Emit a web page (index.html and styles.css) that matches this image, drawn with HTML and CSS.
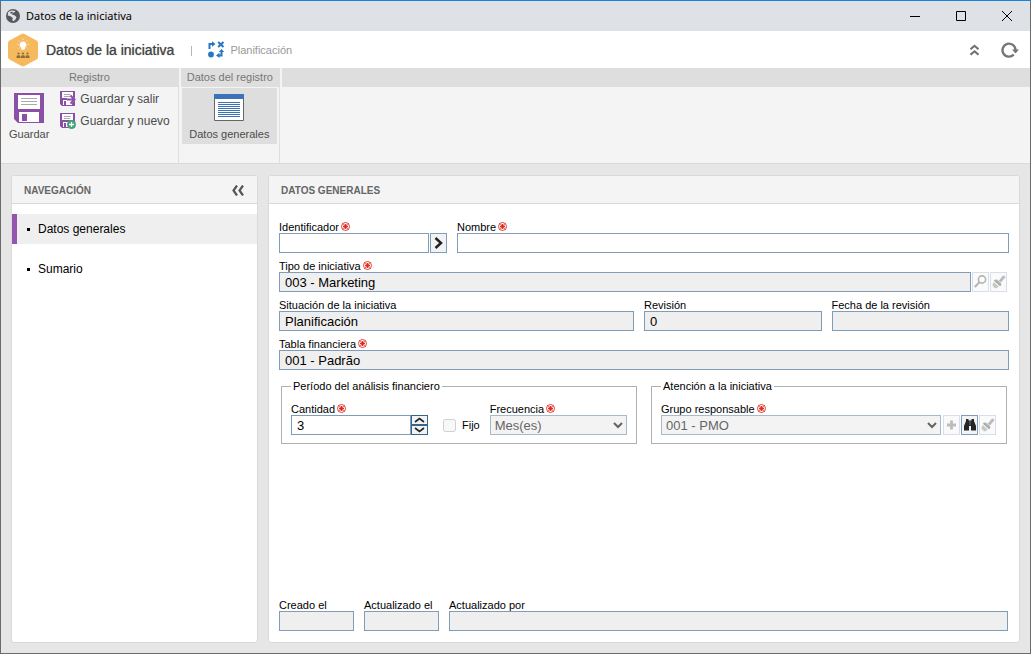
FILE: index.html
```html
<!DOCTYPE html>
<html lang="es">
<head>
<meta charset="utf-8">
<title>Datos de la iniciativa</title>
<link rel="stylesheet" href="styles.css">
</head>
<body>
<svg class="defs" aria-hidden="true">
  <symbol id="req" viewBox="0 0 9 9">
    <circle cx="4.500" cy="4.500" r="4" fill="#fff" stroke="#e0281c" stroke-width=".9"/>
    <path d="M4.500 2v5M2 4.500h5" stroke="#e0281c" stroke-width="1.700"/>
    <path d="M1.500 1.500l6 6M7.500 1.500l-6 6" stroke="#e0281c" stroke-width=".6"/>
  </symbol>
  <symbol id="brush" viewBox="0 0 15 18">
    <path d="M13.300 2.800l1 1.300-4.300 5.300-2.300-2z" fill="#b9b9b9"/>
    <path d="M9.500 5.600l2.500-3.100 1.500.5.800 1.500-3.200 2.800z" fill="#bdbdbd"/>
    <path d="M3.200 7l1.300-.6 5.800 5.100-.4 1.300-1.200.3-5.500-5z" fill="#a8a8a8"/>
    <path d="M5.800 6.300l4.700 4.400-1.300 1.300-4.600-4.400z" fill="#b4b4b4"/>
    <path d="M2.800 9l5 4.800-3 1.700-1.300-1-1.200.1.300-1.400-1.400-.8z" fill="#c6c6c6"/>
  </symbol>
  <symbol id="disk" viewBox="0 0 15 15">
    <path d="M0 0h15v15H2L0 13z" fill="#8b4fa8"/>
    <path d="M2 1h11v6H2zM3 9h9v5H3z" fill="#fff"/>
    <path d="M4 3.500h7M4 5.500h6" stroke="#aaa" stroke-width="1"/>
    <path d="M4 10h2v4H4z" fill="#8b4fa8"/>
  </symbol>
</svg>
<div class="window">
  <header class="titlebar">
    <svg class="globe" viewBox="0 0 14 14" aria-hidden="true">
      <circle cx="7" cy="7" r="7" fill="#55585c"/>
      <path d="M2 3.500C4 1.500 7 1 9.500 2.200L8 3.500 6.500 4 6 5.500l2.500.7L10.500 8 9.500 10.500 7 12.500 6.300 10.500 6.800 9 4.500 7.200 1.800 6.500z" fill="#dee1e6"/>
      <path d="M4 3.500l2.300-1 .7 1L5 5z" fill="#55585c"/>
    </svg>
    <span class="titlebar-text">Datos de la iniciativa</span>
    <div class="window-buttons">
      <button type="button" aria-label="Minimizar"><svg viewBox="0 0 11 11"><path d="M0 5.500h10" stroke="#000"/></svg></button>
      <button type="button" aria-label="Maximizar"><svg viewBox="0 0 11 11"><path d="M.5.500h9v9h-9z" fill="none" stroke="#000"/></svg></button>
      <button type="button" aria-label="Cerrar"><svg viewBox="0 0 11 11"><path d="M0 0l10 10M10 0L0 10" stroke="#000"/></svg></button>
    </div>
  </header>

  <div class="heading">
    <svg class="hexagon" viewBox="0 0 32 34" aria-hidden="true">
      <path d="M14.500.9q1.500-.8 3 0l12 6.600q1.500.9 1.500 2.500v14q0 1.600-1.500 2.500l-12 6.600q-1.500.8-3 0l-12-6.600Q1 25.600 1 24V10q0-1.600 1.500-2.500z" fill="#f6b95d"/>
      <path d="M16 8.500a3.300 3.300 0 0 1 2 6l-.4 2.300h-3.200l-.4-2.300a3.300 3.300 0 0 1 2-6z" fill="#fff"/>
      <path d="M16 5.500V7M11.800 7.500l1 1M20.200 7.500l-1 1M10 11.300h1.500M20.500 11.300H22M11.500 15.500l1-1M20.500 15.500l-1-1" stroke="#fde9cb"/>
      <g fill="#8d6c3b"><circle cx="11.500" cy="20.500" r="1.100"/><circle cx="16" cy="20.500" r="1.100"/><circle cx="20.500" cy="20.500" r="1.100"/><path d="M9.500 25v-1.300q0-1.400 2-1.400t2 1.400V25zM14 25v-1.300q0-1.400 2-1.400t2 1.400V25zM18.500 25v-1.300q0-1.400 2-1.400t2 1.400V25z"/></g>
    </svg>
    <h1 class="heading-title">Datos de la iniciativa</h1>
    <span class="heading-divider"></span>
    <svg class="flow" viewBox="0 0 17 17" aria-hidden="true">
      <path d="M1.500 8V3H5M13.500 10v4.500H11" fill="none" stroke="#2477c5" stroke-width="2"/>
      <path d="M4 .2L7.500 3 4 5.800zM11.500 11.700V17L8 14.500z" fill="#2477c5"/>
      <path d="M10.800 11l2.700-3 2.700 3z" fill="#2477c5"/>
      <circle cx="3" cy="13.500" r="2.900" fill="#2477c5"/>
      <path d="M10.200 1l5.300 5M15.500 1l-5.300 5" stroke="#2477c5" stroke-width="2"/>
    </svg>
    <span class="heading-stage">Planificación</span>
    <div class="heading-tools">
      <button type="button" aria-label="Contraer"><svg width="9" height="12" viewBox="0 0 9 12"><path d="M.5 5.300l4-3.500 4 3.500M.5 10.800l4-3.500 4 3.500" fill="none" stroke="#707070" stroke-width="2.100"/></svg></button>
      <button type="button" aria-label="Actualizar"><svg width="18" height="16" viewBox="0 0 18 16"><path d="M12.800 12.500A6.500 6.500 0 1 1 14.500 8" fill="none" stroke="#757575" stroke-width="2.400"/><path d="M11 7.500h7l-3.500 4z" fill="#757575"/></svg></button>
    </div>
  </div>

  <div class="ribbon">
    <section class="group">
      <h2 class="group-title">Registro</h2>
      <div class="group-body">
        <button type="button" class="tool-large">
          <svg width="30" height="30" viewBox="0 0 30 30"><path d="M0 0h30v30H4l-4-4z" fill="#8b4fa8"/><path d="M4 2h22v14H4zM5 19h20v10H5z" fill="#fff"/><path d="M7 5.500h16M7 8.500h16M7 11.500h16" stroke="#aaa"/><path d="M8 21h5v7H8z" fill="#8b4fa8"/></svg>
          <span>Guardar</span>
        </button>
        <div class="tool-stack">
          <button type="button" class="tool-small">
            <svg width="16" height="16" viewBox="0 0 16 16"><use href="#disk" width="15" height="15"/><path d="M7 6h3V3l6 5.500-6 5.500v-3H7z" fill="#fff"/><path d="M7 8.500h7M10.500 4.500l4 4-4 4" fill="none" stroke="#8b4fa8" stroke-width="2"/></svg>
            <span>Guardar y salir</span>
          </button>
          <button type="button" class="tool-small">
            <svg width="16" height="16" viewBox="0 0 16 16"><use href="#disk" width="15" height="15"/><circle cx="11.500" cy="11.500" r="4.500" fill="#43a577"/><path d="M11.500 9v5M9 11.500h5" stroke="#fff" stroke-width="1.300"/></svg>
            <span>Guardar y nuevo</span>
          </button>
        </div>
      </div>
    </section>
    <section class="group">
      <h2 class="group-title">Datos del registro</h2>
      <div class="group-body">
        <button type="button" class="tool-large selected">
          <svg width="30" height="30" viewBox="0 0 30 30"><path d="M.5 2.500h29v25H.5z" fill="#fff" stroke="#666"/><path d="M0 1h30v5H0z" fill="#3b73b9"/><path d="M4 9.500h22M4 11.500h22M4 13.500h22M4 15.500h22M4 17.500h22M4 19.500h22M4 21.500h22M4 23.500h22" stroke="#3b73b9"/></svg>
          <span>Datos generales</span>
        </button>
      </div>
    </section>
    <div class="group-rest"><div class="group-title"></div></div>
  </div>

  <main class="workspace">
    <nav class="panel nav">
      <div class="panel-head">
        <h2>NAVEGACIÓN</h2>
        <button type="button" class="plain" aria-label="Ocultar navegación"><svg width="12" height="11" viewBox="0 0 12 11"><path d="M5 .5l-3.500 5 3.500 5M11 .5l-3.500 5 3.500 5" fill="none" stroke="#555" stroke-width="2.200"/></svg></button>
      </div>
      <ul class="nav-list">
        <li><a href="#general" class="current">Datos generales</a></li>
        <li><a href="#sumario">Sumario</a></li>
      </ul>
    </nav>

    <section class="panel content" id="general">
      <div class="panel-head"><h2>DATOS GENERALES</h2></div>
      <form class="form">
        <div class="row">
          <div class="field id-field">
            <label for="ident">Identificador<svg class="req"><use href="#req"/></svg></label>
            <div class="line">
              <input id="ident" type="text">
              <button type="button" class="mini" aria-label="Generar"><svg width="9" height="12" viewBox="0 0 9 12"><path d="M1.500 1L7 6l-5.500 5" fill="none" stroke="#222" stroke-width="2.500"/></svg></button>
            </div>
          </div>
          <div class="field grow">
            <label for="nombre">Nombre<svg class="req"><use href="#req"/></svg></label>
            <input id="nombre" type="text">
          </div>
        </div>
        <div class="field">
          <label for="tipo">Tipo de iniciativa<svg class="req"><use href="#req"/></svg></label>
          <div class="line type-line">
            <input id="tipo" type="text" value="003 - Marketing" readonly>
            <button type="button" class="mini faint" aria-label="Ver" disabled><svg width="15" height="18" viewBox="0 0 15 18"><circle cx="9" cy="6.500" r="3.600" fill="#fff" stroke="#b4b4b4" stroke-width="1.600"/><path d="M6.400 9.200L1.800 14" stroke="#b4b4b4" stroke-width="2"/></svg></button>
            <button type="button" class="mini faint" aria-label="Limpiar tipo" disabled><svg width="15" height="18"><use href="#brush"/></svg></button>
          </div>
        </div>
        <div class="thirds">
          <div class="field"><label for="situacion">Situación de la iniciativa</label><input id="situacion" type="text" value="Planificación" readonly></div>
          <div class="field"><label for="revision">Revisión</label><input id="revision" type="text" value="0" readonly></div>
          <div class="field"><label for="fecha">Fecha de la revisión</label><input id="fecha" type="text" readonly></div>
        </div>
        <div class="field">
          <label for="tabla">Tabla financiera<svg class="req"><use href="#req"/></svg></label>
          <input id="tabla" type="text" value="001 - Padrão" readonly>
        </div>
        <div class="sets">
          <fieldset>
            <legend>Período del análisis financiero</legend>
            <div class="period">
              <div class="field amount">
                <label for="cantidad">Cantidad<svg class="req"><use href="#req"/></svg></label>
                <div class="amount-line">
                  <input id="cantidad" type="text" value="3">
                  <div class="spinner">
                    <button type="button" aria-label="Aumentar"><svg width="11" height="6" viewBox="0 0 11 6"><path d="M1 5l4.500-3.500L10 5" fill="none" stroke="#222" stroke-width="1.600"/></svg></button>
                    <button type="button" aria-label="Disminuir"><svg width="11" height="6" viewBox="0 0 11 6"><path d="M1 1l4.500 3.500L10 1" fill="none" stroke="#222" stroke-width="1.600"/></svg></button>
                  </div>
                </div>
              </div>
              <div class="check"><input id="fijo" type="checkbox" disabled><label for="fijo">Fijo</label></div>
              <div class="field grow">
                <label for="frecuencia">Frecuencia<svg class="req"><use href="#req"/></svg></label>
                <select id="frecuencia" disabled><option>Mes(es)</option></select>
              </div>
            </div>
          </fieldset>
          <fieldset>
            <legend>Atención a la iniciativa</legend>
            <div class="field">
              <label for="grupo">Grupo responsable <svg class="req"><use href="#req"/></svg></label>
              <div class="line group-line">
                <select id="grupo" disabled><option>001 - PMO</option></select>
                <button type="button" class="mini faint" aria-label="Agregar" disabled><svg width="9" height="10" viewBox="0 0 9 10"><path d="M4.500.5v9M0 5h9" stroke="#bcbcbc" stroke-width="2.800"/></svg></button>
                <button type="button" class="mini" aria-label="Buscar"><svg width="12" height="12" viewBox="0 0 12 12"><path d="M2 0h2.500v1.500h3V0H10v2l2 5v4.500H7V7H5v4.500H0V7l2-5z" fill="#252525"/><path d="M5.500 2v4M6.500 2v4" stroke="#777" stroke-width=".5"/></svg></button>
                <button type="button" class="mini faint" aria-label="Limpiar grupo" disabled><svg width="15" height="18"><use href="#brush"/></svg></button>
              </div>
            </div>
          </fieldset>
        </div>
        <div class="row audit">
          <div class="field date"><label for="creado">Creado el</label><input id="creado" type="text" readonly></div>
          <div class="field date"><label for="actualizado">Actualizado el</label><input id="actualizado" type="text" readonly></div>
          <div class="field grow"><label for="por">Actualizado por</label><input id="por" type="text" readonly></div>
        </div>
      </form>
    </section>
  </main>
</div>
</body>
</html>
```
FILE: styles.css
```css
* { box-sizing: border-box; }
body {
  margin: 0;
  font: 11px/13px "Liberation Sans", Arial, sans-serif;
  color: #000;
}
h1, h2, ul { margin: 0; padding: 0; }
svg { display: block; flex: none; }
button {
  font: inherit;
  color: inherit;
  margin: 0;
  padding: 0;
  border: 0;
  background: none;
}
.defs { position: absolute; width: 0; height: 0; }

.window {
  min-height: 100vh;
  display: flex;
  flex-direction: column;
  border: 1px solid #6b6b6b;
  border-top-color: #1883d7;
  background: #e6e6e6;
}

.titlebar {
  display: flex;
  align-items: center;
  height: 30px;
  padding-left: 5px;
  background: #dee1e6;
}
.globe { width: 14px; height: 14px; }
.titlebar-text {
  margin-left: 6px;
  font: 11px/16px "Noto Sans", "Open Sans", sans-serif;
}
.window-buttons { display: flex; margin-left: auto; }
.window-buttons button {
  width: 46px;
  height: 30px;
  display: grid;
  place-items: center;
}
.window-buttons svg { width: 11px; height: 11px; }

.heading {
  display: flex;
  align-items: center;
  height: 37px;
  padding: 0 11px 0 6px;
  background: #fff;
}
.hexagon { width: 32px; height: 34px; }
.heading-title {
  margin-left: 7px;
  font-size: 14px;
  font-weight: normal;
  line-height: 16px;
  color: #444;
  text-shadow: 0 0 1px #777;
}
.heading-divider { width: 1px; height: 10px; margin: 2px 16px 0 17px; background: #b5b5b5; }
.flow { width: 17px; height: 17px; }
.heading-stage { margin-left: 5px; padding-top: 1px; color: #999; }
.heading-tools { display: flex; align-items: center; gap: 22px; margin-left: auto; }

.ribbon {
  display: flex;
  height: 96px;
  background: #f4f4f4;
  border-bottom: 1px solid #d9d9d9;
}
.group { border-right: 1px solid #dedede; display: flex; flex-direction: column; }
.group + .group { padding-left: 2px; }
.group-rest { flex: 1; padding-left: 2px; }
.group-title {
  height: 19px;
  padding: 0 6px;
  font-size: 11px;
  font-weight: normal;
  line-height: 19px;
  text-align: center;
  color: #777;
  background: #dedede;
}
.group-body { display: flex; color: #4c4c4c; padding: 1px 8px 0; gap: 11px; }
.group + .group .group-body { padding: 1px 2px 0 1px; }
.tool-large {
  display: flex;
  flex-direction: column;
  align-items: center;
  gap: 5px;
  height: 56px;
  padding-top: 5px;
}
.selected { flex: 1; background: #dedede; }
.tool-stack { display: flex; flex-direction: column; gap: 6px; padding-top: 3px; }
.tool-small { display: flex; align-items: center; gap: 4px; font-size: 12px; line-height: 16px; }

.workspace { flex: 1; display: flex; gap: 10px; padding: 11px 10px 10px; }
.panel {
  display: flex;
  flex-direction: column;
  background: #fff;
  border: 1px solid #d9d9d9;
  border-radius: 3px;
}
.nav { width: 247px; }
.content { flex: 1; min-width: 0; }
.panel-head {
  display: flex;
  align-items: center;
  justify-content: space-between;
  height: 28px;
  padding: 2px 13px 0 12px;
  background: #f4f4f4;
  border-bottom: 1px solid #d9d9d9;
  border-radius: 2px 2px 0 0;
}
.panel-head h2 { font-size: 10px; line-height: 12px; color: #666; }
.nav-list { list-style: none; display: grid; gap: 10px; padding-top: 10px; }
.nav-list a {
  display: flex;
  align-items: center;
  gap: 8px;
  height: 30px;
  padding-left: 10px;
  border-left: 5px solid transparent;
  font-size: 12px;
  color: #000;
  text-decoration: none;
}
.nav-list a::before { content: ""; width: 3px; height: 3px; background: #000; }
.nav-list .current { border-color: #9355ad; background: #efefef; }

.form { flex: 1; display: flex; flex-direction: column; gap: 6px; padding: 16px 10px 11px; }
.row { display: flex; gap: 10px; }
.thirds { display: grid; grid-template-columns: 2fr 1fr 1fr; gap: 10px; }
.grow { flex: 1; min-width: 0; }
.field { display: flex; flex-direction: column; min-width: 0; }
.field > label { display: flex; gap: 2px; height: 13px; line-height: 15px; white-space: nowrap; }
.req { width: 9px; height: 9px; margin-top: 2px; }
.line { display: flex; gap: 1px; }
.type-line { padding-right: 2px; }
.line input, .line select, .amount-line input { flex: 1; min-width: 0; }
.id-field { width: 168px; }
input[type="text"], select {
  width: 100%;
  height: 20px;
  margin: 0;
  font: 13px/16px "Liberation Sans", Arial, sans-serif;
  color: #000;
  border: 1px solid #7f9db9;
  border-radius: 0;
  outline: 0;
}
input[type="text"] { padding: 0 5px; background: #fff; }
input[type="text"]:read-only { background: #efefef; }
select { padding: 0; background: #efefef; }
select:disabled { color: #222; opacity: .7; }
.group-line select { margin-right: 1px; }
.mini {
  flex: none;
  display: grid;
  place-items: center;
  width: 17px;
  height: 20px;
  border: 1px solid #7f9db9;
  background: #f2f3f5;
}
.faint { border-color: #d6dfea; background: #fafafa; }

.sets { display: grid; grid-template-columns: 1fr 1fr; align-items: start; gap: 14px; padding: 4px 2px 0; }
fieldset { min-width: 0; margin: 0; padding: 9px 9px 8px; border: 1px solid #b0b0b0; }
legend { padding: 0 2px; }
.period { display: flex; align-items: flex-end; }
.amount { width: 137px; }
.amount-line { display: flex; }
.spinner { display: flex; flex-direction: column; width: 17px; height: 20px; }
.spinner button {
  flex: 1;
  display: grid;
  place-items: center;
  border: 1px solid #35648f;
  background: #f2f3f5;
}
.check { display: flex; align-items: center; gap: 6px; height: 20px; margin: 0 10px 0 15px; }
.check input { width: 13px; height: 13px; margin: 0; }
.group-line { padding-right: 1px; }
.audit { margin-top: auto; padding-right: 1px; }
.date { width: 75px; }
```
